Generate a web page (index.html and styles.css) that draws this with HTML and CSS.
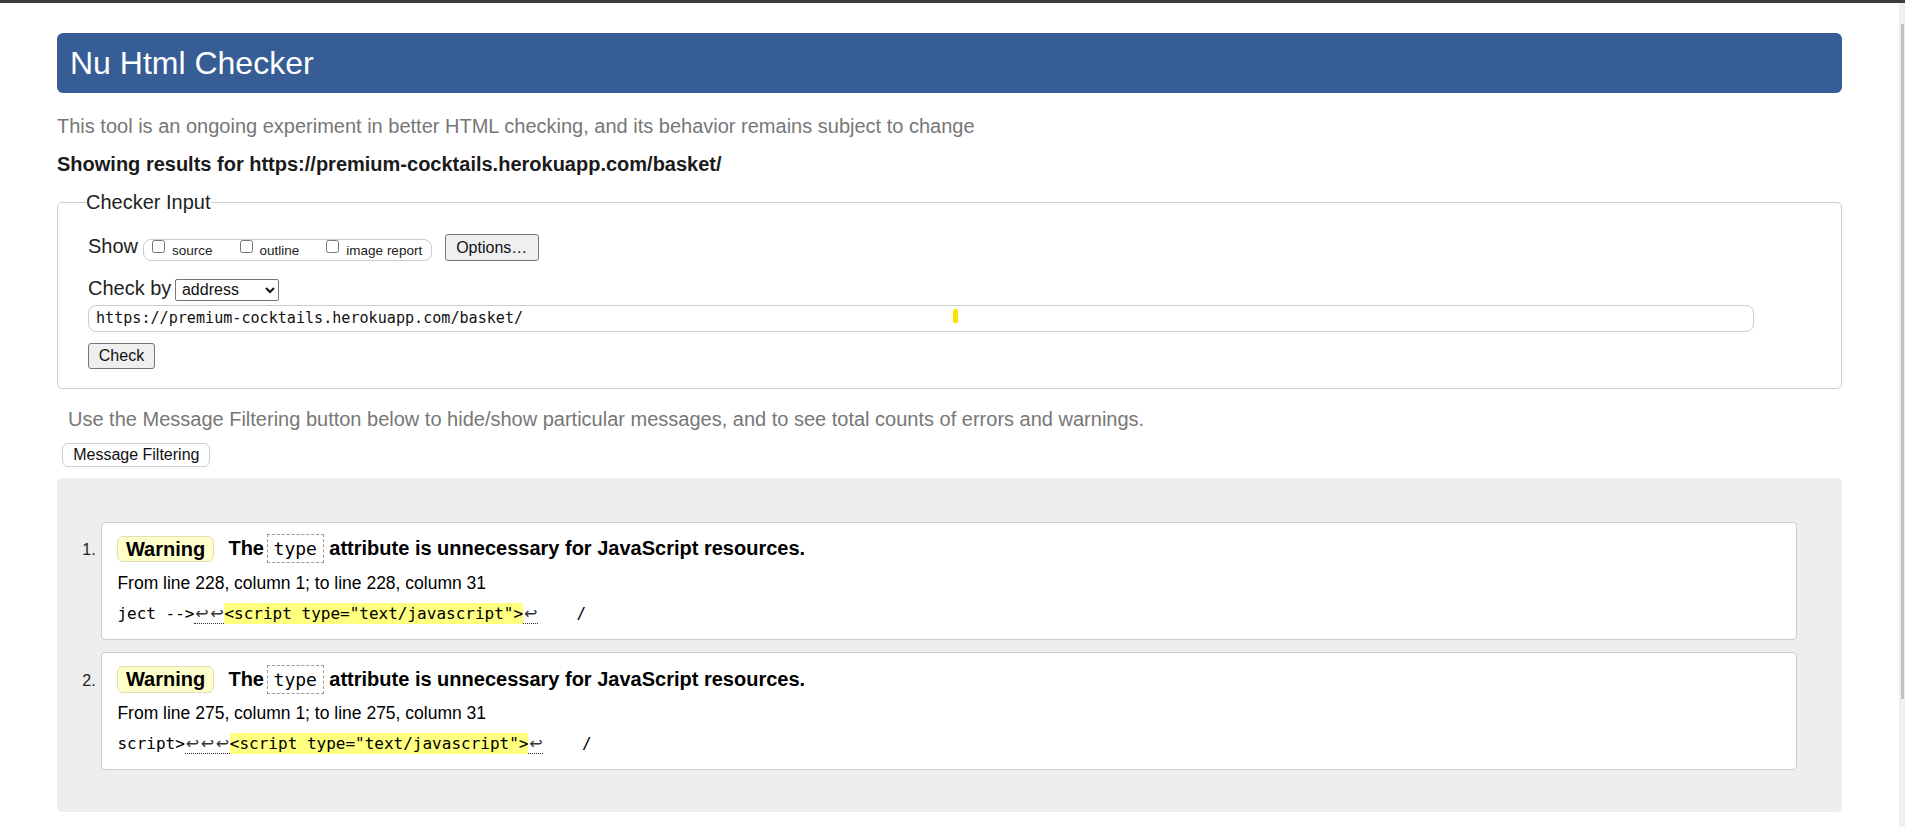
FILE: index.html
```html
<!DOCTYPE html>
<html lang="en">
<head>
<meta charset="utf-8">
<title>Nu Html Checker</title>
<link rel="stylesheet" href="styles.css">
</head>
<body>
<div class="page">
  <h1 class="title">Nu Html Checker</h1>
  <p class="tagline">This tool is an ongoing experiment in better HTML checking, and its behavior remains subject to change</p>
  <p class="showing">Showing results for https://premium-cocktails.herokuapp.com/basket/</p>

  <fieldset class="checker">
    <legend>Checker Input</legend>
    <div class="row row-show">
      <span class="lbl">Show</span>
      <span class="group">
        <label class="opt"><input type="checkbox"><span>source</span></label>
        <label class="opt"><input type="checkbox"><span>outline</span></label>
        <label class="opt"><input type="checkbox"><span>image report</span></label>
      </span>
      <button class="btn btn-options" type="button">Options…</button>
    </div>
    <div class="row row-by">
      <span class="lbl">Check by</span>
      <select class="sel"><option>address</option></select>
    </div>
    <div class="url-wrap">
      <input class="url" type="text" value="https://premium-cocktails.herokuapp.com/basket/">
      <span class="caret-mark"></span>
    </div>
    <button class="btn btn-check" type="button">Check</button>
  </fieldset>

  <p class="hint">Use the Message Filtering button below to hide/show particular messages, and to see total counts of errors and warnings.</p>
  <button class="btn-filter" type="button">Message Filtering</button>

  <div class="results">
    <ol class="messages">
      <li class="msg">
        <span class="num">1.</span>
        <div class="card">
          <div class="msg-head">
            <strong class="badge">Warning</strong>
            <span class="msg-text the">The</span>
            <code class="attr">type</code>
            <span class="msg-text rest">attribute is unnecessary for JavaScript resources.</span>
          </div>
          <p class="location">From line 228, column 1; to line 228, column 31</p>
          <p class="extract">ject --&gt;<span class="ws"><span class="lf">↩</span><span class="lf">↩</span></span><mark>&lt;script type="text/javascript"&gt;</mark><span class="ws"><span class="lf">↩</span></span>    /</p>
        </div>
      </li>
      <li class="msg">
        <span class="num">2.</span>
        <div class="card">
          <div class="msg-head">
            <strong class="badge">Warning</strong>
            <span class="msg-text the">The</span>
            <code class="attr">type</code>
            <span class="msg-text rest">attribute is unnecessary for JavaScript resources.</span>
          </div>
          <p class="location">From line 275, column 1; to line 275, column 31</p>
          <p class="extract">script&gt;<span class="ws"><span class="lf">↩</span><span class="lf">↩</span><span class="lf">↩</span></span><mark>&lt;script type="text/javascript"&gt;</mark><span class="ws"><span class="lf">↩</span></span>    /</p>
        </div>
      </li>
    </ol>
  </div>
</div>
<div class="scrollbar"><div class="thumb"></div></div>
</body>
</html>
```

FILE: styles.css
```css
html, body {
  margin: 0;
  padding: 0;
  background: #fff;
}
body {
  border-top: 3px solid #3c3c3c;
  font-family: "Liberation Sans", Arial, sans-serif;
  color: #222;
}
.page {
  margin: 0 63px 0 57px;
  padding-top: 30px;
  padding-bottom: 14px;
}
.title {
  margin: 0;
  background: #365d95;
  color: #fff;
  font-weight: normal;
  font-size: 32px;
  line-height: 37px;
  padding: 11.5px 13px;
  border-radius: 6px;
}
.tagline {
  margin: 22px 0 0;
  font-size: 20px;
  line-height: 23px;
  color: #777;
}
.showing {
  margin: 15.4px 0 0;
  font-size: 20px;
  line-height: 23px;
  font-weight: bold;
  color: #1a1a1a;
}
.checker {
  margin: 14.7px 0 0;
  padding: 20.3px 30px 19.7px 30px;
  border: 1px solid #ccc;
  border-radius: 5px;
  min-width: 0;
}
.checker legend {
  padding: 0;
  margin-left: -2px;
  font-size: 20px;
  line-height: 23px;
  color: #222;
}
.row {
  display: flex;
  align-items: baseline;
}
.lbl {
  font-size: 20px;
  line-height: 23px;
  color: #222;
}
.group {
  display: inline-flex;
  align-items: flex-start;
  gap: 23px;
  margin-left: 5px;
  padding: 0 8.6px 2.6px 4px;
  border: 1px solid #ccc;
  border-radius: 8px;
}
.opt {
  display: flex;
  align-items: flex-start;
  font-size: 13.5px;
  line-height: 15px;
  color: #222;
}
.opt input {
  width: 13px;
  height: 13px;
  margin: 0 7px 0 4px;
}
.opt span {
  padding-top: 3px;
}
.btn {
  font-family: "Liberation Sans", Arial, sans-serif;
  font-size: 16px;
  line-height: 24px;
  color: #111;
  background: #efefef;
  border: 1px solid #767676;
  border-radius: 3px;
  padding: 0 9.8px;
  height: 27px;
}
.btn-options {
  margin-left: 13px;
  padding: 0 10px;
  width: 94px;
}
.row-by {
  margin-top: 15.6px;
}
.sel {
  margin-left: 3.6px;
  width: 104px;
  height: 22px;
  font-family: "Liberation Sans", Arial, sans-serif;
  font-size: 16px;
  color: #111;
  border: 1px solid #767676;
  border-radius: 2px;
  background: #fff;
  padding: 0 2px;
}
.url-wrap {
  position: relative;
  margin-top: 4.4px;
  width: 1666px;
}
.url {
  display: block;
  box-sizing: border-box;
  width: 1666px;
  height: 26.6px;
  border: 1px solid #ccc;
  border-radius: 8px;
  padding: 0 7px;
  font-family: "DejaVu Sans Mono", "Liberation Mono", monospace;
  font-size: 15.1px;
  color: #111;
  background: #fff;
  outline: none;
}
.caret-mark {
  position: absolute;
  left: 865px;
  top: 4.4px;
  width: 5px;
  height: 14px;
  border-radius: 1.5px;
  background: #ffe000;
}
.btn-check {
  display: block;
  margin-top: 11px;
  width: 67px;
  height: 26px;
}
.hint {
  margin: 18.9px 0 0 11px;
  font-size: 20px;
  line-height: 23px;
  color: #777;
}
.btn-filter {
  display: block;
  margin: 11.4px 0 0 5.3px;
  height: 24.4px;
  width: 148px;
  padding: 0;
  border: 1px solid #ccc;
  border-radius: 6px;
  background: #fff;
  font-family: "Liberation Sans", Arial, sans-serif;
  font-size: 16px;
  color: #111;
}
.results {
  margin-top: 10.6px;
  background: #eee;
  border-radius: 5px;
  padding: 44.4px 45px 41.7px 0;
}
.messages {
  list-style: none;
  margin: 0;
  padding: 0;
  display: flex;
  flex-direction: column;
  gap: 12px;
}
.msg {
  display: flex;
  align-items: flex-start;
}
.num {
  flex: 0 0 44.4px;
  box-sizing: border-box;
  text-align: right;
  padding: 17.5px 5.7px 0 0;
  font-size: 16px;
  line-height: 22px;
  color: #222;
}
.card {
  flex: 1;
  background: #fff;
  border: 1px solid #ccc;
  border-radius: 4px;
  padding: 11.6px 14px 12.8px 15px;
  color: #000;
}
.msg-head {
  display: flex;
  align-items: center;
  height: 29px;
}
.badge {
  font-size: 20px;
  line-height: 24.7px;
  padding: 0 7.6px;
  background: #ffffcc;
  border: 1px solid #e2dfb2;
  border-radius: 6px;
  margin-right: 14.6px;
}
.msg-text {
  font-size: 20px;
  line-height: 23px;
  font-weight: bold;
}
.attr {
  margin: 0 5.8px 0 3px;
  font-family: "DejaVu Sans Mono", "Liberation Mono", monospace;
  font-size: 18px;
  line-height: 27px;
  padding: 0 5.6px;
  border: 1px dashed #999;
  font-weight: normal;
}
.location {
  margin: 7.6px 0 0;
  font-size: 17.5px;
  line-height: 24px;
}
.extract {
  margin: 7.2px 0 0;
  font-family: "DejaVu Sans Mono", "Liberation Mono", monospace;
  font-size: 16px;
  line-height: 24px;
  white-space: pre;
}
.ws {
  border-bottom: 1px dotted #333;
}
.lf {
  display: inline-block;
  width: 15px;
  text-align: center;
  font-family: "DejaVu Sans", sans-serif;
  color: #333;
}
mark {
  background: #ffff80;
  color: #000;
  padding: 1px 0;
}
.scrollbar {
  position: fixed;
  top: 3px;
  right: 0;
  bottom: 0;
  width: 6px;
  background: #f0f0f0;
}
.thumb {
  margin: 21px 0 0 2px;
  width: 3.3px;
  height: 675px;
  background: #c1c1c1;
}
```
